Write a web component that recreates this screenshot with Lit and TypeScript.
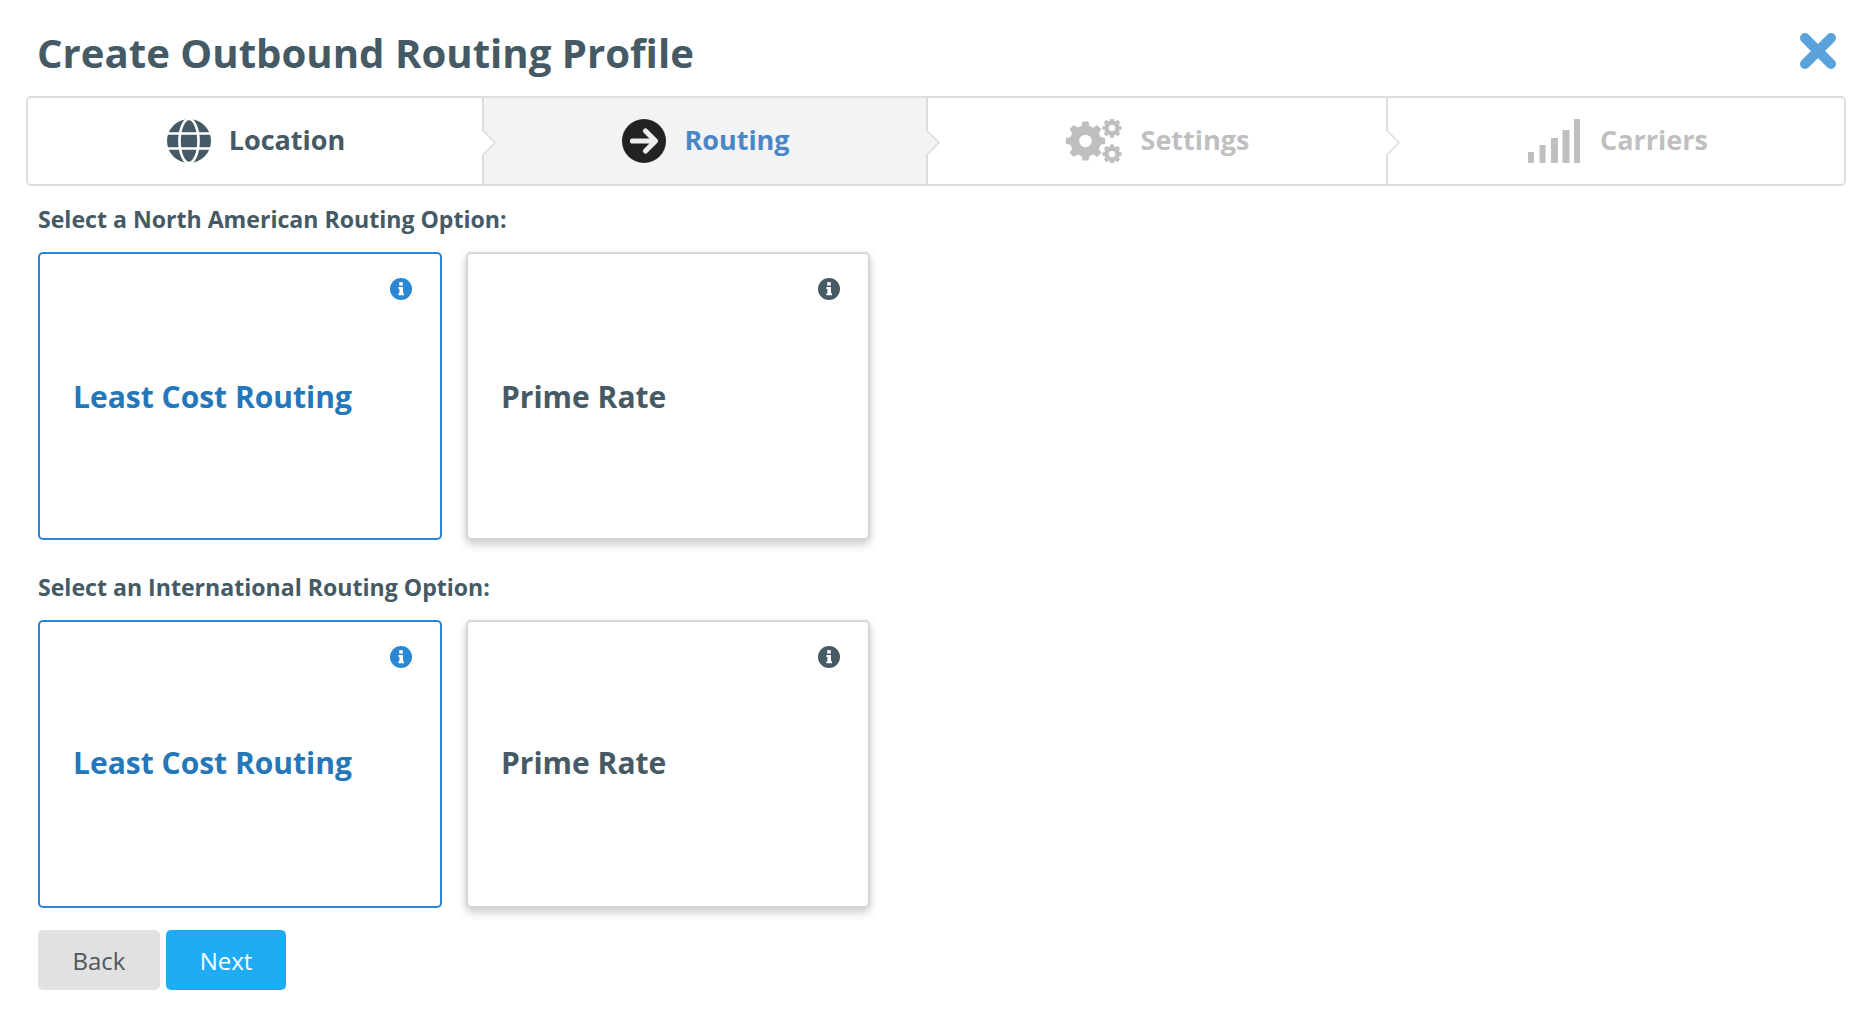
import { LitElement, html, css, svg } from "lit";
import { customElement } from "lit/decorators.js";

function gear(cx: number, cy: number, r: number, hole: number, teeth: number) {
  const pts: string[] = [];
  const inner = r * 0.78;
  const step = (Math.PI * 2) / teeth;
  for (let i = 0; i < teeth; i++) {
    const a = i * step - Math.PI / 2;
    const w = step * 0.2;
    const p = (rad: number, ang: number) =>
      `${(cx + rad * Math.cos(ang)).toFixed(2)} ${(cy + rad * Math.sin(ang)).toFixed(2)}`;
    pts.push(p(inner, a - w * 1.4), p(r, a - w * 0.8), p(r, a + w * 0.8), p(inner, a + w * 1.4));
  }
  const ring = `M${pts.join("L")}Z`;
  const h = `M${cx - hole} ${cy}a${hole} ${hole} 0 1 0 ${hole * 2} 0a${hole} ${hole} 0 1 0 ${-hole * 2} 0Z`;
  return svg`<path fill-rule="evenodd" stroke-linejoin="round" stroke-width="1.5" stroke="#bfbfbf" d="${ring}${h}"></path>`;
}

const globe = html`<svg class="ico" viewBox="0 0 44 44" width="44" height="44">
  <circle cx="22" cy="22" r="22" fill="#455a64"></circle>
  <g fill="none" stroke="#fff" stroke-width="2.6">
    <ellipse cx="22" cy="22" rx="9.5" ry="22"></ellipse>
    <path d="M0 14.5H44M0 29.5H44"></path>
  </g>
</svg>`;

const arrow = html`<svg class="ico" viewBox="0 0 44 44" width="44" height="44">
  <circle cx="22" cy="22" r="22" fill="#222"></circle>
  <path d="M10.5 22H33M23.5 12L33.5 22L23.5 32" fill="none" stroke="#eee" stroke-width="5.2" stroke-linecap="round" stroke-linejoin="round"></path>
</svg>`;

const cogs = html`<svg class="ico" viewBox="0 0 58 44" width="58" height="44" fill="#bfbfbf">
  ${gear(20.5, 22, 19, 7, 8)}${gear(47, 9, 9, 4, 8)}${gear(47, 35, 9, 4, 8)}
</svg>`;

const bars = html`<svg class="ico" viewBox="0 0 52 44" width="52" height="44" fill="#bfbfbf">
  <rect x="0" y="33" width="6" height="11"></rect>
  <rect x="11.5" y="26" width="6" height="18"></rect>
  <rect x="23" y="19" width="7" height="25"></rect>
  <rect x="34.5" y="11" width="7" height="33"></rect>
  <rect x="46" y="0" width="6" height="44"></rect>
</svg>`;

const chevron = (fill: string) => html`<svg class="chev" viewBox="0 0 16 30" width="16" height="30">
  <path d="M0 0L14 14.5L0 29Z" fill="${fill}"></path>
  <path d="M1 0.5L14 13.5L1 27" transform="translate(0 1)" fill="none" stroke="#dcdcdc" stroke-width="1.5"></path>
</svg>`;

const info = html`<svg class="info" viewBox="0 0 22 22" width="22" height="22">
  <circle cx="11" cy="11" r="11" fill="currentColor"></circle>
  <rect x="9.2" y="4.2" width="3.6" height="3.4" fill="#fff"></rect>
  <path d="M8.4 9H13V15.2H14V17.2H8.4V15.2H9.4V11H8.4Z" fill="#fff"></path>
</svg>`;

@customElement("app-root")
export class AppRoot extends LitElement {
  static styles = css`
    :host {
      display: block;
      height: 1014px;
      overflow: hidden;
      background: #fff;
      font-family: "Open Sans", "Liberation Sans", sans-serif;
      color: #455a64;
    }
    .wrap {
      padding: 0 8px 0 26px;
    }
    .head {
      height: 96px;
      display: flex;
      align-items: flex-start;
      justify-content: space-between;
      padding-left: 11px;
      padding-right: 10px;
    }
    h1 {
      margin: 28px 0 0;
      font-size: 40.15px;
      line-height: 50px;
      font-weight: 700;
    }
    .close {
      margin-top: 33px;
      display: block;
    }
    .steps {
      display: flex;
      height: 90px;
      box-sizing: border-box;
      border: 2px solid #dedede;
      border-radius: 5px;
    }
    .step {
      position: relative;
      box-sizing: border-box;
      display: flex;
      align-items: center;
      justify-content: center;
      gap: 18px;
      font-size: 27px;
      font-weight: 700;
      border-right: 2px solid #dcdcdc;
    }
    .step span {
      margin-top: -3px;
    }
    .step:last-child {
      border-right: 0;
    }
    .step.s1 { width: 456px; padding-left: 2px; }
    .step.s2 { width: 444px; padding-left: 2px; background: #f2f3f5; color: #4a86c5; }
    .step.s3 { width: 460px; color: #bfbfbf; }
    .step.s4 { flex: 1; padding-left: 4px; gap: 20px; color: #bfbfbf; }
    .ico { display: block; flex: none; }
    .chev {
      position: absolute;
      left: 100%;
      top: 30px;
      margin-left: -1px;
      z-index: 1;
    }
    .body {
      padding-left: 12px;
    }
    .label {
      font-size: 23.1px;
      font-weight: 700;
      line-height: 32px;
      margin: 17px 0 0;
    }
    .cards {
      display: flex;
      gap: 24px;
      margin-top: 17px;
    }
    .card {
      position: relative;
      box-sizing: border-box;
      width: 404px;
      height: 288px;
      border: 2px solid #d6d6d6;
      border-radius: 5px;
      background: #fff;
      box-shadow: 0 4px 10px rgba(0, 0, 0, 0.22);
      display: flex;
      align-items: center;
      padding-left: 33px;
      font-size: 30px;
      font-weight: 700;
      color: #455a64;
    }
    .cards.intl .card {
      padding-bottom: 4px;
    }
    .card.on {
      border-color: #2b87d1;
      box-shadow: none;
      color: #2477b8;
    }
    .card .info {
      position: absolute;
      top: 24px;
      right: 28px;
      color: #455a64;
    }
    .card.on .info {
      color: #2b87d1;
    }
    .sec2 { margin-top: 31px; }
    .btns {
      display: flex;
      gap: 6px;
      margin-top: 22px;
    }
    .btn {
      border: 0;
      height: 60px;
      border-radius: 5px;
      font: 400 24px "Open Sans", sans-serif;
      padding: 0;
    }
    .back { width: 122px; background: #e0e1e3; color: #555; }
    .next { width: 120px; background: #1eacf4; color: #fff; }
  `;

  private cards(intl: boolean) {
    return html`<div class="cards ${intl ? "intl" : ""}">
      <div class="card on">${info}<span>Least Cost Routing</span></div>
      <div class="card">${info}<span>Prime Rate</span></div>
    </div>`;
  }

  render() {
    return html`<div class="wrap">
      <div class="head">
        <h1>Create Outbound Routing Profile</h1>
        <svg class="close" viewBox="0 0 36 36" width="36" height="36">
          <path d="M5 5L31 31M31 5L5 31" fill="none" stroke="#5aa2db" stroke-width="10" stroke-linecap="round"></path>
        </svg>
      </div>
      <div class="steps">
        <div class="step s1">${globe}<span>Location</span>${chevron("#fff")}</div>
        <div class="step s2">${arrow}<span>Routing</span>${chevron("#f2f3f5")}</div>
        <div class="step s3">${cogs}<span>Settings</span>${chevron("#fff")}</div>
        <div class="step s4">${bars}<span>Carriers</span></div>
      </div>
      <div class="body">
        <p class="label">Select a North American Routing Option:</p>
        ${this.cards(false)}
        <p class="label sec2">Select an International Routing Option:</p>
        ${this.cards(true)}
        <div class="btns">
          <button class="btn back">Back</button>
          <button class="btn next">Next</button>
        </div>
      </div>
    </div>`;
  }
}
